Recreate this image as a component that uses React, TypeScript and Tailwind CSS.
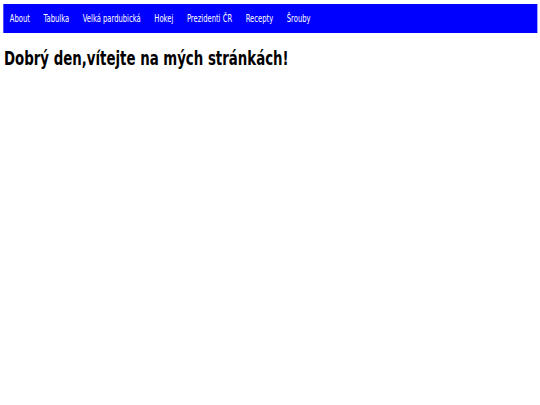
import React from "react";

const items = ["About", "Tabulka", "Velká pardubická", "Hokej", "Prezidenti ČR", "Recepty", "Šrouby"];

export default function App() {
  return (
    <div className="h-[405px] w-[540px] overflow-hidden bg-white">
      <div
        className="w-[810px] origin-top-left scale-x-[0.6667] px-[4.5px] pt-[4px]"
        style={{ fontFamily: '"DejaVu Sans", sans-serif' }}
      >
        <nav className="flex h-[29px] items-center bg-[#0000ff] text-[10.2px] text-white">
          {items.map((t) => (
            <a key={t} href="#" className="px-[10.2px] text-white no-underline">{t}</a>
          ))}
        </nav>
        <h1 className="mt-[13px] mx-[1.5px] text-[20px] font-bold leading-tight text-black">Dobrý den,vítejte na mých stránkách!</h1>
      </div>
    </div>
  );
}
